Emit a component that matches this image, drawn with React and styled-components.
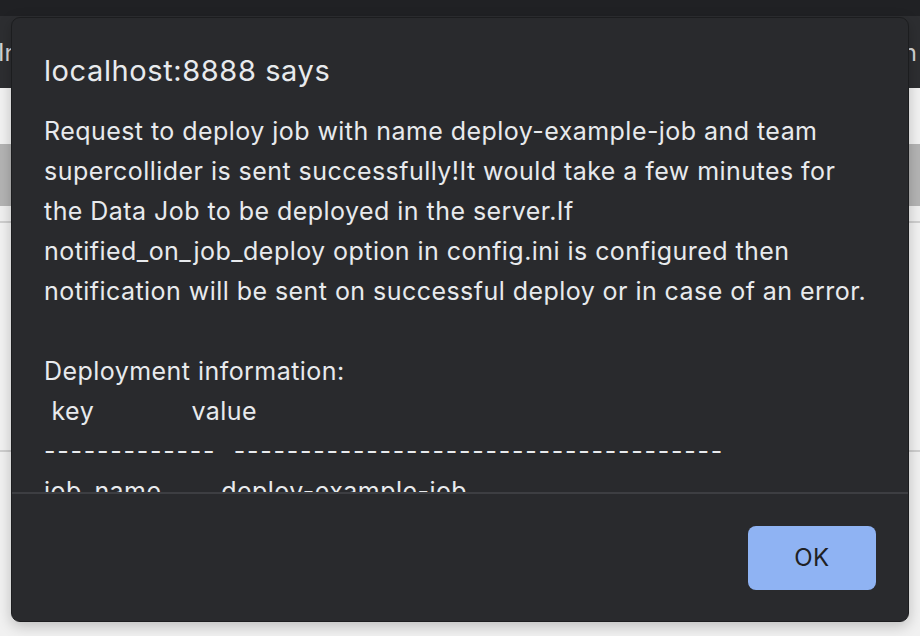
import React from 'react';
import styled, { createGlobalStyle } from 'styled-components';

const GlobalStyle = createGlobalStyle`
  html, body {
    margin: 0;
    padding: 0;
    background: #f1f1f1;
  }
  body {
    font-family: Inter, "Liberation Sans", sans-serif;
  }
`;

const Page = styled.div`
  position: relative;
  width: 920px;
  height: 636px;
  overflow: hidden;
  background: #f1f1f1;
`;

const TopBar = styled.div`
  height: 16px;
  background: #202124;
`;

const TabStrip = styled.div`
  height: 72px;
  background: #2d2e31;
  display: flex;
  align-items: center;
  justify-content: space-between;
  padding: 0 3px 0 0;
  margin-left: -2px;
  color: #d4d5d8;
  font-size: 24px;
`;

const Band = styled.div`
  height: ${(p) => p.h}px;
  background: ${(p) => p.bg};
  border-bottom: ${(p) => (p.line ? '2px solid #cfcfcf' : 'none')};
`;

const Dialog = styled.div`
  position: absolute;
  left: 11px;
  top: 17px;
  width: 898px;
  height: 605px;
  box-sizing: border-box;
  background: #292a2d;
  border: 1px solid #1c1d1f;
  border-radius: 9px;
  box-shadow: 0 4px 14px rgba(0, 0, 0, 0.22);
  display: flex;
  flex-direction: column;
  overflow: hidden;
`;

const Scroll = styled.div`
  height: 474px;
  overflow: hidden;
  padding: 33px 20px 0 32px;
  box-sizing: border-box;
  color: #e8eaed;
`;

const Title = styled.div`
  font-size: 29px;
  letter-spacing: 0.6px;
  line-height: 40px;
  margin-bottom: 20px;
`;

const Message = styled.div`
  font-size: 25px;
  letter-spacing: 0.45px;
  line-height: 40px;
  white-space: pre;
`;

const TableLine = styled.div`
  font-size: 25px;
  letter-spacing: ${(p) => (p.rule ? '1.75px' : '0.45px')};
  line-height: 40px;
  white-space: pre;
`;

const Divider = styled.div`
  height: 2px;
  background: #3d3e42;
`;

const Footer = styled.div`
  flex: 1;
  display: flex;
  align-items: center;
  justify-content: flex-end;
  padding-right: 32px;
`;

const OkButton = styled.button`
  width: 128px;
  height: 64px;
  border: none;
  border-radius: 8px;
  background: #8fb3f3;
  color: #202124;
  font-family: Inter, "Liberation Sans", sans-serif;
  font-size: 24px;
  letter-spacing: 0.4px;
  cursor: pointer;
`;

const message = [
  'Request to deploy job with name deploy-example-job and team',
  'supercollider is sent successfully!It would take a few minutes for',
  'the Data Job to be deployed in the server.If',
  'notified_on_job_deploy option in config.ini is configured then',
  'notification will be sent on successful deploy or in case of an error.',
  '',
  'Deployment information:',
].join('\n');

const table = [
  { text: ' key             value' },
  { text: '-------------  -------------------------------------', rule: true },
  { text: 'job_name        deploy-example-job' },
  { text: 'job_version     latest' },
];

const App = () => (
  <Page>
    <GlobalStyle />
    <TopBar />
    <TabStrip>
      <span>In</span>
      <span>n</span>
    </TabStrip>
    <Band h={56} bg="#f2f2f2" />
    <Band h={62} bg="#b4b4b4" />
    <Band h={15} bg="#f0f0f0" line />
    <Band h={227} bg="#f2f2f2" line />
    <Dialog>
      <Scroll>
        <Title>localhost:8888 says</Title>
        <Message>{message}</Message>
        {table.map((row, i) => (
          <TableLine key={i} rule={row.rule}>
            {row.text}
          </TableLine>
        ))}
      </Scroll>
      <Divider />
      <Footer>
        <OkButton>OK</OkButton>
      </Footer>
    </Dialog>
  </Page>
);

export default App;
